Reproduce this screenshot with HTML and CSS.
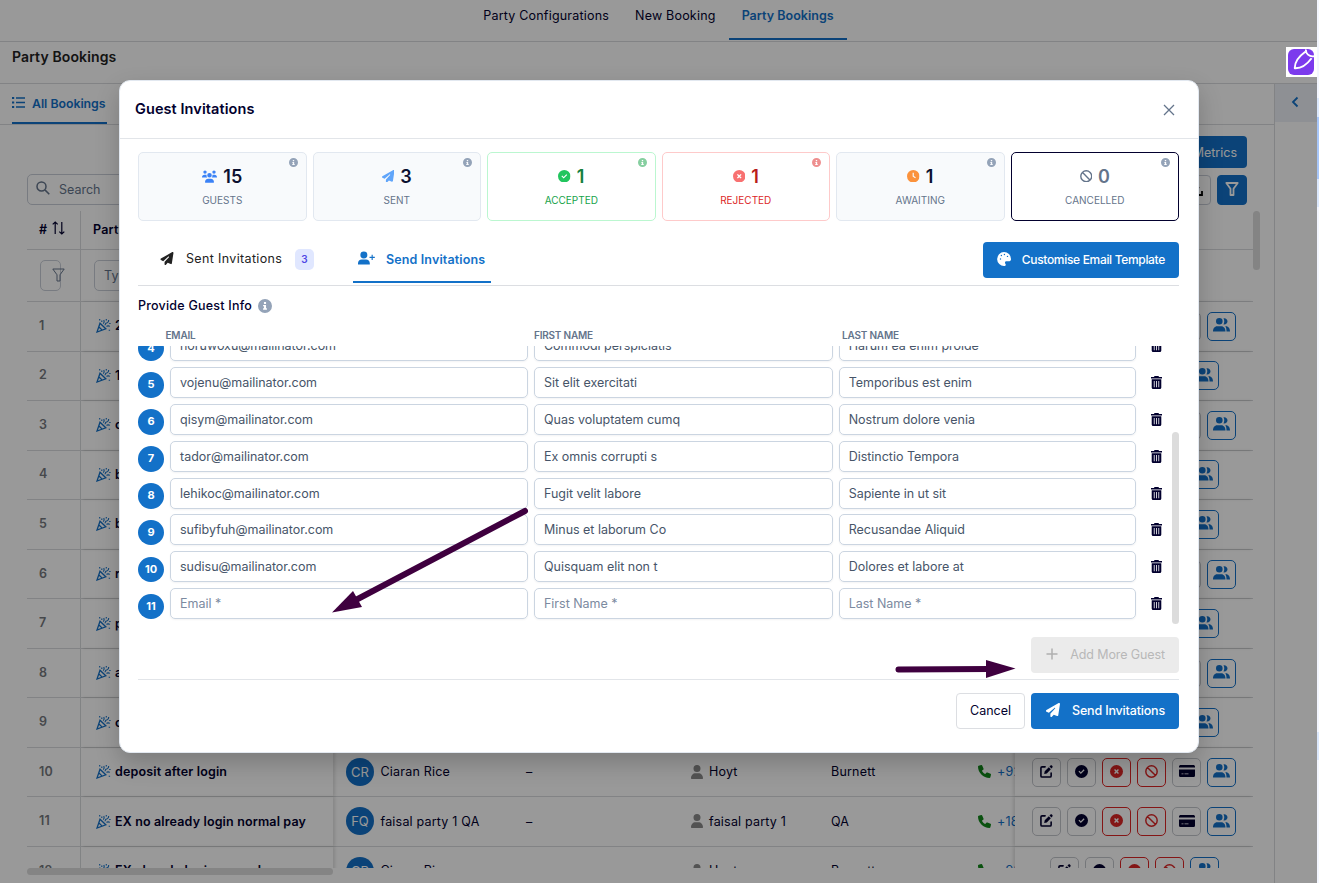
FILE: index.html
```
<!DOCTYPE html>
<html lang="en">
<head>
  <meta charset="UTF-8" />
  <meta name="viewport" content="width=device-width, initial-scale=1.0"/>
  <title>Party Bookings</title>
  <link rel="stylesheet" href="styles.css">
</head>
<body>
  <!-- icon set -->
  <svg class="sprite">
    <symbol id="i-users" viewBox="0 0 15 13"><path d="M3 .4a1.700 1.700 0 110 3.400 1.700 1.700 0 010-3.400zM12 .4a1.700 1.700 0 110 3.400 1.700 1.700 0 010-3.400zM7.500 3a2.300 2.300 0 110 4.600 2.300 2.300 0 010-4.600zM0 7.400c0-1.600 1-2.700 2.500-2.700h1.200c.4 0 .7.100.9.200-.2 1 .1 1.900.7 2.500zM15 7.400c0-1.600-1-2.700-2.500-2.700h-1.200c-.4 0-.7.100-.9.200.2 1-.1 1.900-.7 2.500zM3 12.200c0-2 1.300-3.400 3.200-3.400h2.600c1.900 0 3.200 1.400 3.200 3.400 0 .3-.2.500-.5.500h-8c-.3 0-.5-.2-.5-.5z"/></symbol>
    <symbol id="i-plane" viewBox="0 0 512 512"><path d="M498 5.600c10 7 15 19 13 31l-64 416c-1.500 10-8 18-16 23s-19 5-28 1.500l-120-50-68 74c-9 10-23 13-35 8S160 493 160 480v-84c0-4 1.500-8 4-11l168-183c6-6 5.500-16-.500-22s-16-6-22-.500L106 361l-88-44c-11-5-18-16-18-28s6-23 16-29l448-256c11-6 24-5 34 1.600z"/></symbol>
    <symbol id="i-info" viewBox="0 0 16 16"><path fill-rule="evenodd" d="M8 0a8 8 0 110 16A8 8 0 018 0zM6.800 3.500v2.200h2.400V3.500zM5.800 6.900v1.500h1v2.300h-1v1.600h4.400v-1.600h-1V6.900z"/></symbol>
    <symbol id="i-check" viewBox="0 0 16 16"><path fill-rule="evenodd" d="M8 0a8 8 0 110 16A8 8 0 018 0zM10.700 5.300L7.200 8.800 5.400 7 4.300 8.100l2.900 2.900 4.600-4.600z"/></symbol>
    <symbol id="i-reject" viewBox="0 0 16 16"><path fill-rule="evenodd" d="M8 0a8 8 0 110 16A8 8 0 018 0zM6.200 5L5 6.200 6.800 8 5 9.800 6.200 11 8 9.200 9.800 11 11 9.800 9.200 8 11 6.200 9.800 5 8 6.800z"/></symbol>
    <symbol id="i-clock" viewBox="0 0 16 16"><path fill-rule="evenodd" d="M8 0a8 8 0 110 16A8 8 0 018 0zM7.200 3.500v4.900l3.200 2.200.9-1.200-2.600-1.800V3.500z"/></symbol>
    <symbol id="i-ban" viewBox="0 0 16 16"><path fill="none" stroke="currentColor" stroke-width="1.800" d="M8 1a7 7 0 110 14A7 7 0 018 1zM3 3l10 10"/></symbol>
    <symbol id="i-adduser" viewBox="0 0 18 14"><path d="M6.200 0a3.700 3.700 0 110 7.400 3.700 3.700 0 010-7.400zM0 14v-1.500c0-2.200 1.700-3.900 4-3.900h4.500c2.300 0 4 1.700 4 3.900V14z"/><path fill="none" stroke="currentColor" stroke-width="1.200" d="M15 3.500v5.600M12.200 6.300h5.600"/></symbol>
    <symbol id="i-palette" viewBox="0 0 16 16"><path fill-rule="evenodd" d="M8 0a8 8 0 018 8v.3c0 1.500-1.200 2.400-2.500 2.400h-2.800c-1 0-1.600.8-1.600 1.600 0 .9.900 1.200.9 2.200 0 .9-.7 1.500-1.700 1.500A8 8 0 018 0zM4 7.200a.8.800 0 100 1.600.8.800 0 000-1.600zm1-4a.8.800 0 100 1.600.8.800 0 000-1.600zm3.500-1.200a.8.800 0 100 1.600.8.800 0 000-1.600zM12 4.200a.8.800 0 100 1.600.8.800 0 000-1.600z"/></symbol>
    <symbol id="i-trash" viewBox="0 0 11 13"><path fill-rule="evenodd" d="M3.500 0h4l.5 1h3v1.600H0V1h3zM.7 3.300h9.600v8.200c0 .8-.6 1.500-1.400 1.500H2.100c-.8 0-1.400-.7-1.400-1.500zM2.800 5v6.300h.8V5zm2.300 0v6.300h.8V5zm2.300 0v6.300h.8V5z"/></symbol>
    <symbol id="i-group" viewBox="0 0 17 14"><path d="M6.300 0a3.300 3.300 0 110 6.600 3.300 3.300 0 010-6.600zM0 13.500c0-3 1.500-5.300 4.200-5.300h4c2.700 0 4.300 2.300 4.300 5.300zM10.500.2c2.300-.4 4 1.200 4 3.100s-1.700 3.500-4 3.100c1-1.900 1-4.300 0-6.200zM12.200 8.200h.8c2.500 0 4 2.300 4 5.300h-3.500c0-2.300-.3-3.900-1.300-5.300z"/></symbol>
    <symbol id="i-edit" viewBox="0 0 14 14"><path fill="none" stroke="currentColor" stroke-width="1.700" stroke-linecap="round" stroke-linejoin="round" d="M5.500 2H2.200C1.400 2 1 2.500 1 3.200v8.600c0 .8.500 1.200 1.200 1.200h8.600c.8 0 1.200-.5 1.200-1.200V8.600"/><path d="M4.500 9.800l.6-3 4.400-4.400 2.200 2.200-4.400 4.500zM10.200 1.600l.9-.9c.6-.6 1.200-.6 1.700-.1l.5.500c.5.500.5 1.200 0 1.700l-.9.9z"/></symbol>
    <symbol id="i-card" viewBox="0 0 16 12"><path fill-rule="evenodd" d="M1.700 0h12.600C15.200 0 16 .7 16 1.600v1H0v-1C0 .7.800 0 1.700 0zM0 4.500h16v5.900c0 .9-.8 1.600-1.700 1.600H1.700C.8 12 0 11.300 0 10.400zM2.500 8.500v.8h2v-.8zm3 0v.8h4v-.8z"/></symbol>
    <symbol id="i-person" viewBox="0 0 12 14"><path d="M6 0a3.500 3.500 0 110 7 3.500 3.500 0 010-7zM0 13.300C0 10.300 2 8.200 4.600 8.200h2.800c2.600 0 4.600 2.100 4.600 5.100 0 .4-.2.700-.6.700H.6c-.4 0-.6-.3-.6-.7z"/></symbol>
    <symbol id="i-phone" viewBox="0 0 14 14"><path d="M4.500.5L5.900 3.800c.2.400.1.900-.3 1.200L4.200 6.200c.8 1.600 2 2.800 3.600 3.600L9 8.400c.3-.4.8-.5 1.200-.3l3.300 1.400c.4.200.6.700.5 1.100l-.7 2.700c-.1.400-.5.700-.9.700C5.600 14 0 8.400 0 1.700c0-.5.300-.8.700-.9L3.400 0c.5-.1.900.1 1.100.5z"/></symbol>
    <symbol id="i-party" viewBox="0 0 15 15"><path fill="none" stroke="currentColor" stroke-width="1.300" d="M4 5.200L1 14l8.800-3.200zM2.700 8.800l3.500 3.300"/><path fill="none" stroke="currentColor" stroke-width="1.100" d="M7.300 5.700c1-1.100 1.100-2.400.5-3.700M9 7.300c.2-1.800 1-2.400 2.200-2.500 1.300-.2 1.500-1.200 1.500-2.700M10.400 8.400c1.200-.8 2.300-.7 3.400 0M3.700 1v1.500M5.800 2.500V4M10.300 1v1.600M12.700 12.200h1.400M13.200 5.500h1.400"/></symbol>
    <symbol id="i-funnel" viewBox="0 0 13 14"><path fill="none" stroke="currentColor" stroke-linejoin="round" d="M.8 1h11.400L8 6.800V13H5V6.800z"/></symbol>
    <symbol id="i-search" viewBox="0 0 14 14"><path fill="none" stroke="currentColor" stroke-width="1.500" d="M5.500 1a4.500 4.500 0 110 9 4.500 4.500 0 010-9zM8.900 8.900l4.400 4.400"/></symbol>
    <symbol id="i-list" viewBox="0 0 13 11"><path d="M0 0h2.200v2H0zM4 .3h9v1.500H4zM0 4.500h2.200v2H0zM4 4.800h9v1.500H4zM0 9h2.200v2H0zM4 9.300h9v1.500H4z"/></symbol>
    <symbol id="i-sort" viewBox="0 0 13 14"><path fill="none" stroke="currentColor" stroke-width="1.200" d="M3.200 13V1M.7 3.400L3.200 1l2.500 2.400M9.800 1v12M7.300 10.600L9.800 13l2.500-2.400"/></symbol>
  </svg>

  <div class="app">
    <nav class="topnav">
      <a class="topnav-link">Party Configurations</a>
      <a class="topnav-link">New Booking</a>
      <a class="topnav-link active">Party Bookings</a>
    </nav>
    <div class="page-title">Party Bookings</div>
    <div class="page-body">
      <div class="content">
        <div class="page-tabs">
          <a class="page-tab"><svg class="icon-list"><use href="#i-list"/></svg>All Bookings</a>
        </div>
        <div class="toolbar-top"><button class="metrics-btn">Metrics</button></div>
        <div class="toolbar">
          <div class="search"><svg><use href="#i-search"/></svg>Search</div>
          <div class="toolbar-actions">
            <button class="sq-btn"><svg viewBox="0 0 14 14"><path fill="none" stroke="currentColor" stroke-width="1.800" d="M7 0v8M4 5l3 3 3-3M1 9v4h12V9"/></svg></button>
            <button class="sq-btn filled"><svg class="bold"><use href="#i-funnel"/></svg></button>
          </div>
        </div>
        <div class="table-wrap">
          <div class="table">
            <div class="row head">
              <div class="cell num"># <svg class="icon-sort"><use href="#i-sort"/></svg></div>
              <div class="cell">Party Name</div>
            </div>
            <div class="row filters">
              <div class="cell num"><span class="filter-box"><svg><use href="#i-funnel"/></svg></span></div>
              <div class="cell"><span class="filter-input">Type</span></div>
            </div>
            <div id="bookings"></div>
          </div>
          <div class="v-thumb"></div>
        </div>
        <div class="h-thumb"></div>
      </div>
      <aside class="side">
        <div class="side-toggle"><svg viewBox="0 0 8 12"><path d="M6.500 1.500L2 6l4.500 4.500"/></svg></div>
      </aside>
    </div>
  </div>
  <div class="edge"></div>
  <div class="overlay"></div>

  <div class="modal">
    <div class="modal-header">
      <h2>Guest Invitations</h2>
      <svg class="close" viewBox="0 0 12 12"><path d="M1 1l10 10M11 1L1 11"/></svg>
    </div>
    <div class="modal-body">
      <div class="stats">
        <div class="stat guests"><svg class="info"><use href="#i-info"/></svg><div class="value"><svg><use href="#i-users"/></svg>15</div><div class="label">GUESTS</div></div>
        <div class="stat sent"><svg class="info"><use href="#i-info"/></svg><div class="value"><svg><use href="#i-plane"/></svg>3</div><div class="label">SENT</div></div>
        <div class="stat accepted"><svg class="info"><use href="#i-info"/></svg><div class="value"><svg><use href="#i-check"/></svg>1</div><div class="label">ACCEPTED</div></div>
        <div class="stat rejected"><svg class="info"><use href="#i-info"/></svg><div class="value"><svg><use href="#i-reject"/></svg>1</div><div class="label">REJECTED</div></div>
        <div class="stat awaiting"><svg class="info"><use href="#i-info"/></svg><div class="value"><svg><use href="#i-clock"/></svg>1</div><div class="label">AWAITING</div></div>
        <div class="stat cancelled"><svg class="info"><use href="#i-info"/></svg><div class="value"><svg><use href="#i-ban"/></svg>0</div><div class="label">CANCELLED</div></div>
      </div>

      <div class="tabs">
        <div class="tab"><svg class="icon-plane"><use href="#i-plane"/></svg><span class="tab-text">Sent Invitations</span><span class="badge">3</span></div>
        <div class="tab active"><svg class="icon-add"><use href="#i-adduser"/></svg><span class="tab-text">Send Invitations</span></div>
        <button class="btn primary customise"><svg><use href="#i-palette"/></svg><span>Customise Email Template</span></button>
      </div>

      <div class="section-title"><span>Provide Guest Info</span><svg><use href="#i-info"/></svg></div>
      <div class="guest-head"><span>EMAIL</span><span>FIRST NAME</span><span>LAST NAME</span></div>
      <div class="guest-scroll">
        <div class="guest-list" id="guests"></div>
        <div class="guest-thumb"></div>
      </div>
      <div class="add-row">
        <button class="btn disabled"><svg viewBox="0 0 12 12"><path d="M6 .5v11M.5 6h11"/></svg><span>Add More Guest</span></button>
      </div>
      <div class="modal-footer">
        <button class="btn cancel"><span>Cancel</span></button>
        <button class="btn primary send"><svg><use href="#i-plane"/></svg><span>Send Invitations</span></button>
      </div>
    </div>
  </div>

  <div class="pen-badge">
    <svg viewBox="0 0 26 26"><rect width="26" height="26" rx="6" fill="#7c3aed"/><path fill="none" stroke="#fff" stroke-width="1.900" stroke-linejoin="round" d="M17.300 2.800C11.500 7 6.500 12 6.800 19.300c7.300.4 12.700-4.500 16.800-10M18 .5c-.6 4 3.200 7.500 8 6.700"/></svg>
  </div>

  <!-- pointer arrows -->
  <svg class="arrows" viewBox="0 0 1319 883">
    <path d="M525 511L352 602M898.500 669.500L990 669"/>
    <polygon points="332,612.500 353,591 362,607"/>
    <polygon points="1015.500,668.500 986,660 986,678"/>
  </svg>

  <script src="script.js"></script>
</body>
</html>
```

FILE: styles.css
```
* {
  box-sizing: border-box;
}
body {
  margin: 0;
  width: 1319px;
  height: 883px;
  overflow: hidden;
  position: relative;
  background: #fff;
  font-family: "Inter", "Liberation Sans", sans-serif;
  font-size: 12.5px;
  color: #02002e;
}
svg {
  fill: currentColor;
  flex-shrink: 0;
}
button {
  font-family: inherit;
  font-size: inherit;
}
.sprite {
  position: absolute;
  width: 0;
  height: 0;
}

/* page behind the dialog */
.app {
  width: 1317px;
  height: 883px;
  overflow: hidden;
}
.topnav {
  height: 42px;
  display: flex;
  justify-content: center;
  border-bottom: 1px solid #d9dbde;
}
.topnav-link {
  height: 40px;
  padding: 8px 13px 0;
  line-height: 16px;
  letter-spacing: .2px;
}
.topnav-link.active {
  color: #1371c8;
  font-weight: 600;
  letter-spacing: .03px;
  border-bottom: 2px solid #1371c8;
}
.page-title {
  height: 42px;
  border-bottom: 1px solid #d9dbde;
  padding: 5px 12px;
  line-height: 20px;
  font-size: 14px;
  font-weight: 600;
  letter-spacing: .12px;
  color: #222;
}
.page-body {
  display: flex;
  height: 799px;
}
.content {
  width: 1274px;
}
.page-tabs {
  height: 41px;
  border-bottom: 1px solid #d9dbde;
  padding-left: 12px;
}
.page-tab {
  display: inline-flex;
  align-items: center;
  gap: 7px;
  width: 95px;
  height: 40px;
  padding-top: 1px;
  color: #1371c8;
  font-weight: 600;
  font-size: 12.300px;
  letter-spacing: -.02px;
  white-space: nowrap;
  border-bottom: 2px solid #1371c8;
}
.icon-list {
  width: 13px;
  height: 11px;
  margin-bottom: 2px;
}
.toolbar-top {
  display: flex;
  justify-content: flex-end;
  padding: 11px 27px 0 0;
}
.metrics-btn {
  width: 110px;
  height: 32px;
  border: 0;
  border-radius: 4px;
  background: #1371c8;
  color: #fff;
  text-align: right;
  padding-right: 10px;
}
.toolbar {
  display: flex;
  justify-content: space-between;
  padding: 6px 27px 0;
}
.search {
  width: 240px;
  height: 31px;
  border: 1px solid #c9ced8;
  border-radius: 5px;
  display: flex;
  align-items: center;
  gap: 9px;
  padding-left: 8px;
  color: #64748b;
}
.search svg {
  width: 14px;
  height: 14px;
  margin-bottom: 3px;
}
.toolbar-actions {
  display: flex;
  gap: 6px;
  padding-top: 1px;
}
.sq-btn {
  width: 30px;
  height: 30px;
  padding: 0 0 2px;
  border: 1px solid #c9ced8;
  border-radius: 4px;
  background: #fff;
  display: flex;
  align-items: center;
  justify-content: center;
}
.sq-btn svg {
  width: 14px;
  height: 14px;
}
.sq-btn.filled {
  background: #1371c8;
  border-color: #1371c8;
  color: #fff;
}
.bold {
  stroke-width: 1.800;
}
.table-wrap {
  display: flex;
  margin: 6px 0 0 27px;
  height: 657px;
}
.table {
  width: 1226px;
  height: 657px;
  overflow: hidden;
}
.row {
  display: grid;
  grid-template-columns: 54px 252px 181px 171px 134px 158px 38px 238px;
  height: 49.550px;
  border-bottom: 1px solid #d9dbde;
}
.row.head {
  height: 39px;
  font-weight: 600;
}
.row.filters {
  height: 52px;
}
.cell {
  display: flex;
  align-items: center;
  white-space: nowrap;
  padding-left: 12px;
  padding-bottom: 1px;
  letter-spacing: .2px;
}
.cell.num {
  border-right: 1px solid #d9dbde;
}
.head .num {
  gap: 5px;
}
.filters .cell {
  padding-bottom: 0;
}
.icon-sort {
  width: 13px;
  height: 14px;
  margin-bottom: 4px;
}
.filter-box {
  width: 21px;
  height: 31px;
  margin-left: 1px;
  padding: 7px 0 0 11px;
  border: 1px solid #c9ced8;
  border-radius: 5px;
  color: #64748b;
}
.filter-box svg {
  width: 13px;
  height: 14px;
}
.filter-input {
  width: 200px;
  height: 31px;
  line-height: 29px;
  margin-left: 1px;
  padding-left: 9px;
  border: 1px solid #c9ced8;
  border-radius: 5px;
  color: #64748b;
}
.cell.index {
  color: #75787e;
  font-weight: 600;
  padding-bottom: 2px;
}
.cell.name {
  padding-left: 15px;
  gap: 4px;
  font-weight: 600;
  letter-spacing: .15px;
  box-shadow: 2px 0 3px rgba(0,0,0,.12);
}
.cell.name svg {
  width: 15px;
  height: 15px;
  color: #1371c8;
}
.avatar {
  width: 28px;
  height: 28px;
  border-radius: 50%;
  background: #1371c8;
  color: #fff;
  font-size: 13px;
  letter-spacing: 0;
  display: flex;
  align-items: center;
  justify-content: center;
  margin: 0 6.500px 0 1px;
}
.cell.first svg {
  width: 12px;
  height: 14px;
  color: #8a8a8a;
  margin-right: 6px;
}
.cell.first {
  padding-left: 6px;
}
.cell.phone {
  padding-left: 1px;
  color: #1371c8;
  overflow: hidden;
}
.cell.phone svg {
  width: 13px;
  height: 13px;
  color: #11881a;
  margin-right: 6px;
}
.cell.actions {
  justify-content: center;
  gap: 6px;
  padding: 0;
  box-shadow: -2px 0 3px rgba(0,0,0,.12);
}
.act {
  width: 29px;
  height: 29px;
  border: 1px solid #c4c6cc;
  border-radius: 5px;
  display: flex;
  align-items: center;
  justify-content: center;
  padding-bottom: 2px;
}
.act svg {
  width: 13px;
  height: 13px;
}
.act.red {
  border-color: #dc2626;
  color: #dc2626;
}
.act.blue {
  border-color: #1371c8;
  color: #1371c8;
}
.act.blue svg {
  width: 17px;
  height: 14px;
}
.act.wide svg {
  width: 16px;
  height: 12px;
}
.v-thumb {
  width: 7px;
  height: 59px;
  border-radius: 4px;
  background: #dcdcdc;
}
.h-thumb {
  width: 306px;
  height: 7px;
  margin-left: 27px;
  border-radius: 4px;
  background: #dcdcdc;
}
.side {
  width: 43px;
  border-left: 1px solid #d9dbde;
}
.side-toggle {
  height: 38px;
  background: #edf1f7;
  padding: 12px 0 0 16px;
}
.side-toggle svg {
  width: 8px;
  height: 12px;
  fill: none;
  stroke: #1371c8;
  stroke-width: 1.800;
}
.edge {
  position: absolute;
  top: 0;
  right: 0;
  width: 2px;
  height: 883px;
  background: linear-gradient(#f3f6ff 98px, #dbe8fd 98px 117px, #a8c7fa 117px 179px, #dbe8fd 179px 207px, #f3f6ff 207px 732px, #dbe8fd 732px 760px, #f3f6ff 760px);
}
.overlay {
  position: absolute;
  top: 0;
  left: 0;
  width: 1317px;
  height: 883px;
  background: rgba(0,0,0,.4);
}

/* dialog */
.modal {
  position: absolute;
  top: 80px;
  left: 119px;
  width: 1080px;
  height: 673px;
  background: #fff;
  border: 1px solid #e2e8f0;
  border-radius: 11px;
  box-shadow: 0 10px 24px rgba(0,0,0,.2);
}
.modal-header {
  height: 58px;
  border-bottom: 1px solid #e2e5e9;
  display: flex;
  align-items: center;
  justify-content: space-between;
  padding: 0 23px 0 15px;
}
.modal-header h2 {
  margin: 0 0 2px;
  font-size: 14.500px;
  font-weight: 600;
  letter-spacing: .08px;
}
.close {
  width: 12px;
  height: 12px;
  fill: none;
  stroke: #64748b;
  stroke-width: 1.300;
}
.modal-body {
  padding: 13px 19px 0 18px;
}
.stats {
  display: grid;
  grid-template-columns: repeat(6, 1fr);
  gap: 6px;
}
.stat {
  position: relative;
  height: 69px;
  border: 1px solid #e2e8f0;
  border-radius: 5px;
  background: #f8fafc;
  text-align: center;
  color: #0b1030;
}
.info {
  position: absolute;
  top: 5px;
  right: 8px;
  width: 9px;
  height: 9px;
  color: #94a3b8;
}
.value {
  display: flex;
  justify-content: center;
  align-items: center;
  gap: 6px;
  height: 24px;
  margin-top: 11px;
  font-size: 18px;
  font-weight: 600;
}
.value svg {
  width: 12.500px;
  height: 12.500px;
}
.label {
  margin-top: 5px;
  font-size: 10px;
  line-height: 14px;
  color: #64748b;
}
.guests .value svg {
  width: 15px;
  height: 13px;
  color: #3b82f6;
}
.sent .value svg {
  color: #60a5fa;
}
.stat.accepted {
  background: #fff;
  border-color: #bbf7d0;
}
.accepted .value {
  color: #15803d;
}
.accepted .value svg {
  color: #22c55e;
}
.accepted .label {
  color: #16a34a;
}
.accepted .info {
  color: #86cfa0;
}
.stat.rejected {
  background: #fff;
  border-color: #fecaca;
}
.rejected .value {
  color: #b91c1c;
}
.rejected .value svg {
  color: #f87171;
}
.rejected .label {
  color: #dc2626;
}
.rejected .info {
  color: #ee8f8f;
}
.awaiting .value svg {
  color: #fb923c;
}
.stat.cancelled {
  background: #fff;
  border-color: #02002e;
}
.cancelled .value {
  color: #64748b;
}
.tabs {
  display: flex;
  height: 65px;
  padding-top: 14px;
  border-bottom: 1px solid #dcdee2;
}
.tab {
  display: flex;
  align-items: center;
  height: 48px;
  padding: 0 22px;
  color: #222;
}
.tab-text {
  width: 96px;
  white-space: nowrap;
  letter-spacing: .35px;
  margin-bottom: 1px;
}
.icon-plane {
  width: 14px;
  height: 13px;
  margin: 0 12px 2px 0;
}
.badge {
  width: 19px;
  height: 21px;
  margin-left: 13px;
  border-radius: 5px;
  background: #e0e7ff;
  color: #4f46e5;
  font-size: 10px;
  font-weight: 600;
  line-height: 21px;
  text-align: center;
}
.tab.active {
  width: 138px;
  margin-left: 17px;
  padding: 0 5px;
  color: #1371c8;
  border-bottom: 2px solid #1371c8;
  font-weight: 600;
}
.tab.active .tab-text {
  letter-spacing: .13px;
  margin: 2px 0 0;
}
.icon-add {
  width: 17px;
  height: 14px;
  margin-right: 11px;
}
.btn {
  display: flex;
  align-items: center;
  height: 36px;
  border: 0;
  border-radius: 4px;
  padding: 0 14px;
  white-space: nowrap;
}
.btn svg {
  width: 14px;
  height: 14px;
}
.btn span {
  margin-bottom: 1px;
}
.primary {
  background: #1371c8;
  color: #fff;
  font-weight: 500;
}
.customise {
  width: 196px;
  margin: 7px 0 0 auto;
  justify-content: space-between;
  font-size: 12px;
  letter-spacing: -.32px;
}
.customise svg {
  margin-bottom: 2px;
}
.section-title {
  display: flex;
  align-items: center;
  gap: 6px;
  height: 40px;
  font-weight: 500;
  letter-spacing: .22px;
}
.section-title span {
  margin-bottom: 1px;
}
.section-title svg {
  width: 14px;
  height: 14px;
  color: #94a3b8;
}
.guest-head {
  display: grid;
  grid-template-columns: 368.500px 308px 1fr;
  height: 20px;
  padding-left: 27.500px;
  line-height: 19px;
  font-size: 10px;
  font-weight: 600;
  letter-spacing: -.2px;
  color: #64748b;
}
.guest-scroll {
  display: flex;
  justify-content: space-between;
  height: 278px;
  overflow: hidden;
}
.guest-list {
  margin-top: -16px;
}
.guest {
  display: grid;
  grid-template-columns: 26px 358px 298.700px 297.700px 11px;
  column-gap: 6px;
  height: 36.900px;
  color: #475569;
}
.guest-no {
  width: 26px;
  height: 25.500px;
  margin-top: 5.500px;
  border-radius: 50%;
  background: #1371c8;
  color: #fff;
  font-size: 11px;
  font-weight: 700;
  line-height: 25px;
  text-align: center;
}
.field {
  height: 31px;
  border: 1px solid #cbd5e1;
  border-radius: 5px;
  padding-left: 9px;
  line-height: 29px;
  font-size: 12.500px;
  letter-spacing: -.02px;
  box-shadow: 0 1px 2px rgba(15,23,42,.05);
}
.field.empty {
  color: #7c8aa0;
}
.guest svg {
  width: 11px;
  height: 13px;
  margin: 9px 0 0 9px;
  color: #02002e;
}
.guest-thumb {
  width: 7px;
  height: 192px;
  margin-top: 86px;
  border-radius: 4px;
  background: #dcdcdc;
}
.add-row {
  display: flex;
  justify-content: flex-end;
  height: 56px;
  padding-top: 13px;
  border-bottom: 1px solid #e2e5e9;
}
.disabled {
  width: 148px;
  justify-content: space-between;
  background: #ebebeb;
  color: #b8b8b8;
  letter-spacing: -.1px;
}
.disabled svg {
  width: 12px;
  height: 12px;
  margin: 0 0 2px 1px;
  fill: none;
  stroke: #b0b0b0;
  stroke-width: 1.500;
}
.modal-footer {
  display: flex;
  justify-content: flex-end;
  gap: 6px;
  padding-top: 13px;
}
.cancel {
  width: 69px;
  justify-content: center;
  border: 1px solid #dcdee2;
  background: #fff;
  color: #02002e;
}
.send {
  width: 148px;
  justify-content: space-between;
  letter-spacing: -.17px;
}
.send svg {
  margin: 0 0 2px 1px;
}

.pen-badge {
  position: absolute;
  top: 47px;
  left: 1286px;
  width: 31px;
  height: 30px;
  padding: 2px;
  background: #fff;
}
.pen-badge svg {
  display: block;
  width: 26px;
  height: 26px;
}
.arrows {
  position: absolute;
  top: 0;
  left: 0;
  width: 1319px;
  height: 883px;
  fill: #3f003f;
  pointer-events: none;
}
.arrows path {
  stroke: #3f003f;
  stroke-width: 6;
  stroke-linecap: round;
}
```

FILE: script.js
```
const icon = (name) => `<svg><use href="#i-${name}"/></svg>`;

// name, initials, client, first name, last name, phone, has payment button
const bookings = [
  ['2', '', '', '', '', '', true],
  ['1', '', '', '', '', '', false],
  ['c', '', '', '', '', '', true],
  ['b', '', '', '', '', '', false],
  ['b', '', '', '', '', '', false],
  ['r', '', '', '', '', '', true],
  ['p', '', '', '', '', '', false],
  ['a', '', '', '', '', '', true],
  ['c', '', '', '', '', '', false],
  ['deposit after login', 'CR', 'Ciaran Rice', 'Hoyt', 'Burnett', '+92', true],
  ['EX no already login normal pay', 'FQ', 'faisal party 1 QA', 'faisal party 1', 'QA', '+18', true],
  ['EX already login normal pay', 'CR', 'Ciaran Rice', 'Hoyt', 'Burnett', '+92', false]
];

document.querySelector('#bookings').innerHTML = bookings.map((b, i) => {
  const [name, initials, client, first, last, phone, pay] = b;
  const details = initials ? `
    <div class="cell"><span class="avatar">${initials}</span>${client}</div>
    <div class="cell">${i < 11 ? '–' : ''}</div>
    <div class="cell first">${icon('person')}${first}</div>
    <div class="cell">${last}</div>
    <div class="cell phone">${icon('phone')}${phone}</div>` : '<div></div><div></div><div></div><div></div><div></div>';
  return `<div class="row">
    <div class="cell num index">${i + 1}</div>
    <div class="cell name">${icon('party')}${name}</div>
    ${details}
    <div class="cell actions">
      <span class="act">${icon('edit')}</span>
      <span class="act">${icon('check')}</span>
      <span class="act red">${icon('reject')}</span>
      <span class="act red">${icon('ban')}</span>
      ${pay ? `<span class="act wide">${icon('card')}</span>` : ''}
      <span class="act blue">${icon('group')}</span>
    </div>
  </div>`;
}).join('');

const guests = [
  ['noruwoxu@mailinator.com', 'Commodi perspiciatis', 'Harum ea enim proide'],
  ['vojenu@mailinator.com', 'Sit elit exercitati', 'Temporibus est enim'],
  ['qisym@mailinator.com', 'Quas voluptatem cumq', 'Nostrum dolore venia'],
  ['tador@mailinator.com', 'Ex omnis corrupti s', 'Distinctio Tempora'],
  ['lehikoc@mailinator.com', 'Fugit velit labore', 'Sapiente in ut sit'],
  ['sufibyfuh@mailinator.com', 'Minus et laborum Co', 'Recusandae Aliquid'],
  ['sudisu@mailinator.com', 'Quisquam elit non t', 'Dolores et labore at'],
  ['Email *', 'First Name *', 'Last Name *']
];

document.querySelector('#guests').innerHTML = guests.map((g, i) => {
  const empty = i === guests.length - 1 ? ' empty' : '';
  return `<div class="guest">
    <span class="guest-no">${i + 4}</span>
    ${g.map((text) => `<div class="field${empty}">${text}</div>`).join('')}
    ${icon('trash')}
  </div>`;
}).join('');
```
